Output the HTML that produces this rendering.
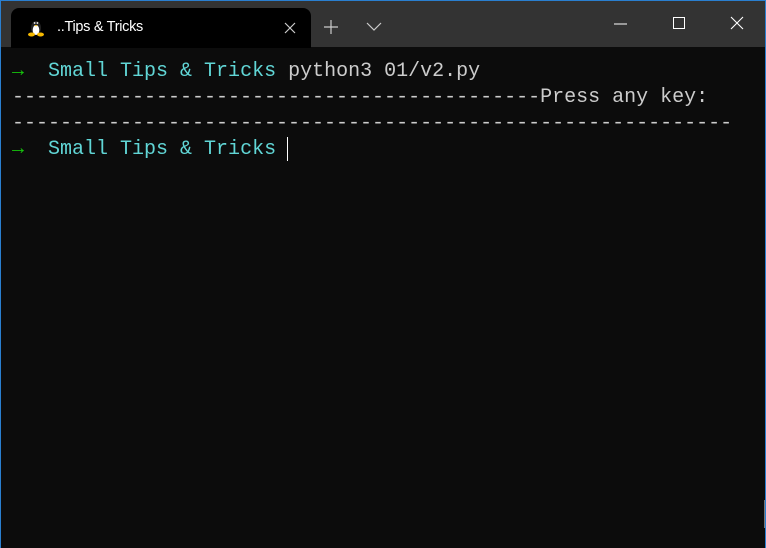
<!DOCTYPE html>
<html><head><meta charset="utf-8"><style>
*{margin:0;padding:0;box-sizing:border-box}
body{width:766px;height:548px;background:#0c0c0c;position:relative;overflow:hidden;font-family:"Liberation Mono",monospace}
.frame{position:absolute;inset:0;border:1px solid #2a7fd0;border-bottom:none}
.title{position:absolute;left:1px;right:1px;top:1px;height:46px;background:#333}
.tab{position:absolute;left:10px;top:7px;width:300px;height:40px;background:#000;border-radius:8px 8px 0 0}
.tab span{position:absolute;left:46px;top:11px;color:#fff;font:14.5px "Liberation Sans",sans-serif;letter-spacing:-0.3px}
.term{position:absolute;left:12px;top:59px;font-size:20px;line-height:26px;color:#cccccc;white-space:pre}
.g{color:#16c60c;font-weight:bold}.c{color:#61d6d6}
.cur{position:absolute;left:287px;top:137px;width:1px;height:24px;background:#fff}
</style></head><body>
<div class="title">
<div class="tab">
<svg style="position:absolute;left:16px;top:10px" width="18" height="19" viewBox="0 0 18 19">
<ellipse cx="9" cy="10" rx="5" ry="7" fill="#222"/><ellipse cx="9" cy="12" rx="3.3" ry="5" fill="#fff"/>
<circle cx="7.6" cy="5" r="0.9" fill="#fff"/><circle cx="10.4" cy="5" r="0.9" fill="#fff"/>
<path d="M7.5 7 L10.5 7 L9 8.5Z" fill="#f5b800"/>
<ellipse cx="4.5" cy="16.5" rx="3.5" ry="2" fill="#f5b800"/><ellipse cx="13.5" cy="16.5" rx="3.5" ry="2" fill="#f5b800"/>
</svg>
<span>..Tips &amp; Tricks</span>
<svg style="position:absolute;left:273px;top:14px" width="12" height="12"><path d="M1 1L11 11M11 1L1 11" stroke="#ccc" stroke-width="1.2"/></svg>
</div>
<svg style="position:absolute;left:322px;top:18px" width="16" height="16"><path d="M8 1V15M1 8H15" stroke="#ccc" stroke-width="1.2"/></svg>
<svg style="position:absolute;left:365px;top:21px" width="16" height="10"><path d="M1 1L8 8L15 1" stroke="#ccc" stroke-width="1.2" fill="none"/></svg>
<svg style="position:absolute;left:613px;top:22px" width="14" height="2"><path d="M0 1H13" stroke="#fff" stroke-width="1"/></svg>
<svg style="position:absolute;left:671px;top:15px" width="14" height="14"><rect x="1.5" y="1.5" width="11" height="11" stroke="#fff" fill="none"/></svg>
<svg style="position:absolute;left:729px;top:15px" width="14" height="14"><path d="M1 1L13 13M13 1L1 13" stroke="#fff" stroke-width="1.1"/></svg>
</div>
<div class="term"><span class="g">→</span>  <span class="c">Small Tips &amp; Tricks</span> python3 01/v2.py
--------------------------------------------Press any key:
------------------------------------------------------------
<span class="g">→</span>  <span class="c">Small Tips &amp; Tricks</span></div>
<div class="cur"></div>
<div style="position:absolute;right:1px;top:500px;width:1px;height:28px;background:#777"></div>
<div class="frame"></div>
</body></html>
